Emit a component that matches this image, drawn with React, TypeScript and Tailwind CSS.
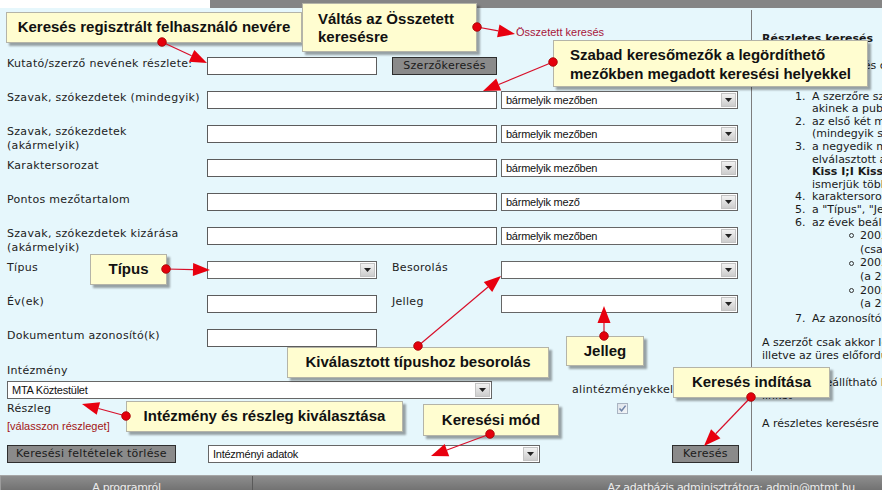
import React from "react";

const V = "font-['DejaVu_Sans',Verdana,sans-serif]";
const A = "font-['Liberation_Sans',Arial,sans-serif]";

function Input({ w }: { w: string }) {
  return <div className={`${w} h-[18px] shrink-0 bg-white border border-[#5c5c5c]`} />;
}

function Select({ w, value }: { w: string; value?: string }) {
  return (
    <div className={`${w} h-[18px] shrink-0 bg-white border border-[#666] flex items-center`}>
      <span className={`${A} flex-1 pl-[4px] text-[11px] leading-[14px] tracking-[-0.25px] text-[#111] whitespace-nowrap overflow-hidden`}>
        {value}
      </span>
      <span className="w-[15px] h-[14px] mr-[1px] bg-gradient-to-b from-[#f2f2f2] to-[#cdcdcd] border border-[#c4c4c4] flex items-center justify-center">
        <svg width="7" height="4" viewBox="0 0 7 4">
          <polygon points="0,0 7,0 3.5,4" fill="#222" />
        </svg>
      </span>
    </div>
  );
}

function Btn({ w, children }: { w: string; children: React.ReactNode }) {
  return (
    <div
      className={`${w} h-[18px] shrink-0 bg-[#8a8a8a] border border-[#2e2e2e] flex items-center justify-center ${V} text-[11px] text-[#1a1a1a] tracking-[0.3px] whitespace-nowrap`}
    >
      {children}
    </div>
  );
}

function Label({ children, w = "w-[200px]" }: { children: React.ReactNode; w?: string }) {
  return <div className={`${w} shrink-0 leading-[14px] text-[#222]`}>{children}</div>;
}

function Callout({
  className,
  children,
}: {
  className: string;
  children: React.ReactNode;
}) {
  return (
    <div
      className={`absolute bg-[#fffdd0] border border-[#b4b4a8] shadow-[3px_3px_2px_rgba(0,0,0,0.35)] ${A} font-bold text-[15px] tracking-normal text-[#111] flex items-center whitespace-nowrap ${className}`}
    >
      {children}
    </div>
  );
}

const arrows: { d: [number, number]; t: [number, number] }[] = [
  { d: [162, 42], t: [207, 63] },
  { d: [477, 27], t: [515, 34] },
  { d: [553, 62], t: [483, 91] },
  { d: [166, 269], t: [210, 270] },
  { d: [418, 346], t: [501, 276] },
  { d: [604, 336], t: [604, 306] },
  { d: [126, 416], t: [82, 404] },
  { d: [490, 434], t: [431, 456] },
  { d: [751, 397], t: [704, 446] },
];

function Arrows() {
  return (
    <svg className="absolute left-0 top-0 pointer-events-none" width="882" height="490">
      {arrows.map((a, i) => {
        const [dx, dy] = a.d;
        const [tx, ty] = a.t;
        const len = Math.hypot(tx - dx, ty - dy);
        const ux = (tx - dx) / len;
        const uy = (ty - dy) / len;
        const L = 17;
        const H = 6.5;
        const bx = tx - ux * L;
        const by = ty - uy * L;
        const p1 = `${bx - uy * H},${by + ux * H}`;
        const p2 = `${bx + uy * H},${by - ux * H}`;
        return (
          <g key={i}>
            <line x1={dx} y1={dy} x2={bx} y2={by} stroke="#d8102a" strokeWidth="1.2" />
            <polygon points={`${tx},${ty} ${p1} ${p2}`} fill="#e8000f" />
            <circle cx={dx} cy={dy} r="4.3" fill="#e4000c" stroke="#a00000" strokeWidth="0.8" />
          </g>
        );
      })}
    </svg>
  );
}

function Num({ n, children, bold }: { n?: string; children: React.ReactNode; bold?: boolean }) {
  return (
    <div className="flex whitespace-nowrap">
      <span className="ml-[33px] w-[17px] shrink-0">{n}</span>
      <span className={bold ? "font-bold" : ""}>{children}</span>
    </div>
  );
}

function Sub({ first, second }: { first: string; second: string }) {
  return (
    <div className="ml-[37px]">
      <div className="flex items-center whitespace-nowrap">
        <span className="w-[11px] shrink-0 flex">
          <span className="w-[5px] h-[5px] rounded-full border border-[#333]" />
        </span>
        <span>{first}</span>
      </div>
      <div className="pl-[11px] whitespace-nowrap">{second}</div>
    </div>
  );
}

export default function App() {
  return (
    <div className={`relative w-[882px] h-[490px] overflow-hidden bg-[#e6f7fc] flex flex-col ${V} text-[11px] tracking-[0.3px] text-[#222]`}>
      {/* top strip */}
      <div className="h-[8px] flex shrink-0">
        <div className="w-[210px] bg-white" />
        <div className="flex-1 bg-[#858585]" />
      </div>

      {/* main */}
      <div className="flex-1 flex min-h-0">
        {/* left form */}
        <div className="w-[751px] shrink-0 pl-[7px] pt-[18px]">
          <div className={`h-[13px] ml-[509px] ${A} text-[11px] leading-[13px] tracking-normal text-[#a8153a]`}>Összetett keresés</div>

          <div className="mt-[18px]">
            <div className="flex h-[34px]">
              <Label>Kutató/szerző nevének részlete:</Label>
              <Input w="w-[170px]" />
              <div className="ml-[15px]">
                <Btn w="w-[105px]">Szerzőkeresés</Btn>
              </div>
            </div>
            <div className="flex h-[34px]">
              <Label>Szavak, szókezdetek (mindegyik)</Label>
              <Input w="w-[290px]" />
              <div className="ml-[4px]">
                <Select w="w-[237px]" value="bármelyik mezőben" />
              </div>
            </div>
            <div className="flex h-[34px]">
              <Label>
                Szavak, szókezdetek
                <br />
                (akármelyik)
              </Label>
              <Input w="w-[290px]" />
              <div className="ml-[4px]">
                <Select w="w-[237px]" value="bármelyik mezőben" />
              </div>
            </div>
            <div className="flex h-[34px]">
              <Label>Karaktersorozat</Label>
              <Input w="w-[290px]" />
              <div className="ml-[4px]">
                <Select w="w-[237px]" value="bármelyik mezőben" />
              </div>
            </div>
            <div className="flex h-[34px]">
              <Label>Pontos mezőtartalom</Label>
              <Input w="w-[290px]" />
              <div className="ml-[4px]">
                <Select w="w-[237px]" value="bármelyik mező" />
              </div>
            </div>
            <div className="flex h-[34px]">
              <Label>
                Szavak, szókezdetek kizárása
                <br />
                (akármelyik)
              </Label>
              <Input w="w-[290px]" />
              <div className="ml-[4px]">
                <Select w="w-[237px]" value="bármelyik mezőben" />
              </div>
            </div>
            <div className="flex h-[34px]">
              <Label>Típus</Label>
              <Select w="w-[170px]" />
              <div className="ml-[15px] flex">
                <Label w="w-[109px]">Besorolás</Label>
                <Select w="w-[237px]" />
              </div>
            </div>
            <div className="flex h-[34px]">
              <Label>Év(ek)</Label>
              <Input w="w-[170px]" />
              <div className="ml-[15px] flex">
                <Label w="w-[109px]">Jelleg</Label>
                <Select w="w-[237px]" />
              </div>
            </div>
            <div className="flex h-[34px]">
              <Label>Dokumentum azonosító(k)</Label>
              <Input w="w-[170px]" />
            </div>
          </div>

          <div className="mt-[1px] flex">
            <div className="w-[485px] shrink-0">
              <div className="leading-[14px]">Intézmény</div>
              <div className="mt-[3px]">
                <Select w="w-[485px]" value="MTA Köztestület" />
              </div>
              <div className="mt-[3px] leading-[14px]">Részleg</div>
              <div className={`mt-[3px] ${A} text-[11px] leading-[14px] tracking-normal text-[#a31515]`}>[válasszon részleget]</div>
            </div>
            <div className="ml-[80px] pt-[19px] flex flex-col items-center">
              <div className="leading-[14px] whitespace-nowrap">alintézményekkel</div>
              <div className="mt-[6px] w-[11px] h-[11px] border border-[#a9b4c2] bg-gradient-to-br from-[#dde3ea] to-[#f4f6f8] flex items-center justify-center">
                <svg width="9" height="9" viewBox="0 0 9 9">
                  <path d="M1.5 4.5 L3.6 6.8 L7.6 1.6" stroke="#6f84a8" strokeWidth="1.5" fill="none" />
                </svg>
              </div>
            </div>
          </div>

          <div className="mt-[12px] flex">
            <Btn w="w-[169px]">Keresési feltételek törlése</Btn>
            <div className="ml-[32px]">
              <Select w="w-[332px]" value="Intézményi adatok" />
            </div>
            <div className="ml-[132px]">
              <Btn w="w-[67px]">Keresés</Btn>
            </div>
          </div>
        </div>

        {/* divider */}
        <div className="w-px shrink-0 bg-[#7d7d7d] mt-[2px] mb-[4px]" />

        {/* right help */}
        <div className="w-[420px] shrink-0 pl-[10px] pt-[24px] leading-[12.6px] tracking-normal text-[#1a1a1a]">
          <div className="font-bold leading-[13px] whitespace-nowrap">Részletes keresés</div>
          <div className="mt-[15px] whitespace-nowrap">Tudnivalók a keresés céljának megfelelő kitöltéséhez:</div>
          <div className="mt-[18px]">
            <Num n="1.">A szerzőre szűrés csak olyan személyekre lehetséges,</Num>
            <Num>akinek a publikációi szerepelnek az adatbázisban</Num>
            <Num n="2.">az első két mezőbe írt szavak</Num>
            <Num>(mindegyik szóra, illetve bármelyikre keres)</Num>
            <Num n="3.">a negyedik mezőben a pontos tartalomra keres, pontosvesszővel</Num>
            <Num>elválasztott alternatívákkal, pl.:</Num>
            <Num bold>Kiss I;I Kiss;Kiss István</Num>
            <Num>ismerjük több írásmódját</Num>
            <Num n="4.">karaktersorozat bárhol előfordulhat</Num>
            <Num n="5.">a "Típus", "Jelleg" és "Besorolás" mezők</Num>
            <Num n="6.">az évek beállítása:</Num>
            <div className="ml-[50px] leading-[13.6px]">
              <Sub first="2005" second="(csak a 2005-ös év)" />
              <Sub first="2005-" second="(a 2005 utáni évek)" />
              <Sub first="2005-2008" second="(a 2005 és 2008 közötti évek)" />
            </div>
            <div className="mt-[2px]">
              <Num n="7.">Az azonosítók vesszővel elválasztva adhatók meg</Num>
            </div>
          </div>
          <div className="mt-[12px] whitespace-nowrap">
            <div>A szerzőt csak akkor lehet kiválasztani, ha</div>
            <div>illetve az üres előfordulás</div>
          </div>
          <div className="mt-[15px] whitespace-nowrap">
            <div>A keresés beállítható lekérdezéshez tartozó</div>
            <div>linket</div>
          </div>
          <div className="mt-[15px] whitespace-nowrap">
            <div>A részletes keresésre vonatkozó súgó</div>
          </div>
        </div>
      </div>

      {/* bottom bar */}
      <div className="h-[15px] shrink-0 flex bg-gradient-to-b from-[#8e8e8e] to-[#727272] border-t border-[#a6a6a6] text-[#ececec] text-[11px] leading-[13px] tracking-[-0.3px]">
        <div className="w-[253px] shrink-0 border-l border-[#9c9c9c] border-r border-r-[#5a5a5a] flex justify-center pt-[5px]">
          A programról
        </div>
        <div className="flex-1 flex justify-end pr-[27px] pt-[5px] whitespace-nowrap">
          Az adatbázis adminisztrátora: admin@mtmt.hu
        </div>
      </div>

      {/* callouts */}
      <Callout className="left-[6px] top-[12px] w-[296px] h-[31px] justify-center">
        Keresés regisztrált felhasználó nevére
      </Callout>
      <Callout className="left-[302px] top-[3px] w-[175px] h-[49px] pl-[15px] leading-[18px]">
        <div>
          Váltás az Összetett
          <br />
          keresésre
        </div>
      </Callout>
      <Callout className="left-[553px] top-[40px] w-[315px] h-[47px] pl-[16px] leading-[19px]">
        <div>
          Szabad keresőmezők a legördíthető
          <br />
          mezőkben megadott keresési helyekkel
        </div>
      </Callout>
      <Callout className="left-[90px] top-[254px] w-[77px] h-[31px] justify-center">Típus</Callout>
      <Callout className="left-[287px] top-[347px] w-[262px] h-[31px] justify-center">
        Kiválasztott típushoz besorolás
      </Callout>
      <Callout className="left-[566px] top-[336px] w-[78px] h-[30px] justify-center">Jelleg</Callout>
      <Callout className="left-[126px] top-[401px] w-[277px] h-[31px] justify-center">
        Intézmény és részleg kiválasztása
      </Callout>
      <Callout className="left-[423px] top-[404px] w-[136px] h-[32px] justify-center">Keresési mód</Callout>
      <Callout className="left-[673px] top-[367px] w-[157px] h-[31px] justify-center">Keresés indítása</Callout>

      <Arrows />
    </div>
  );
}
